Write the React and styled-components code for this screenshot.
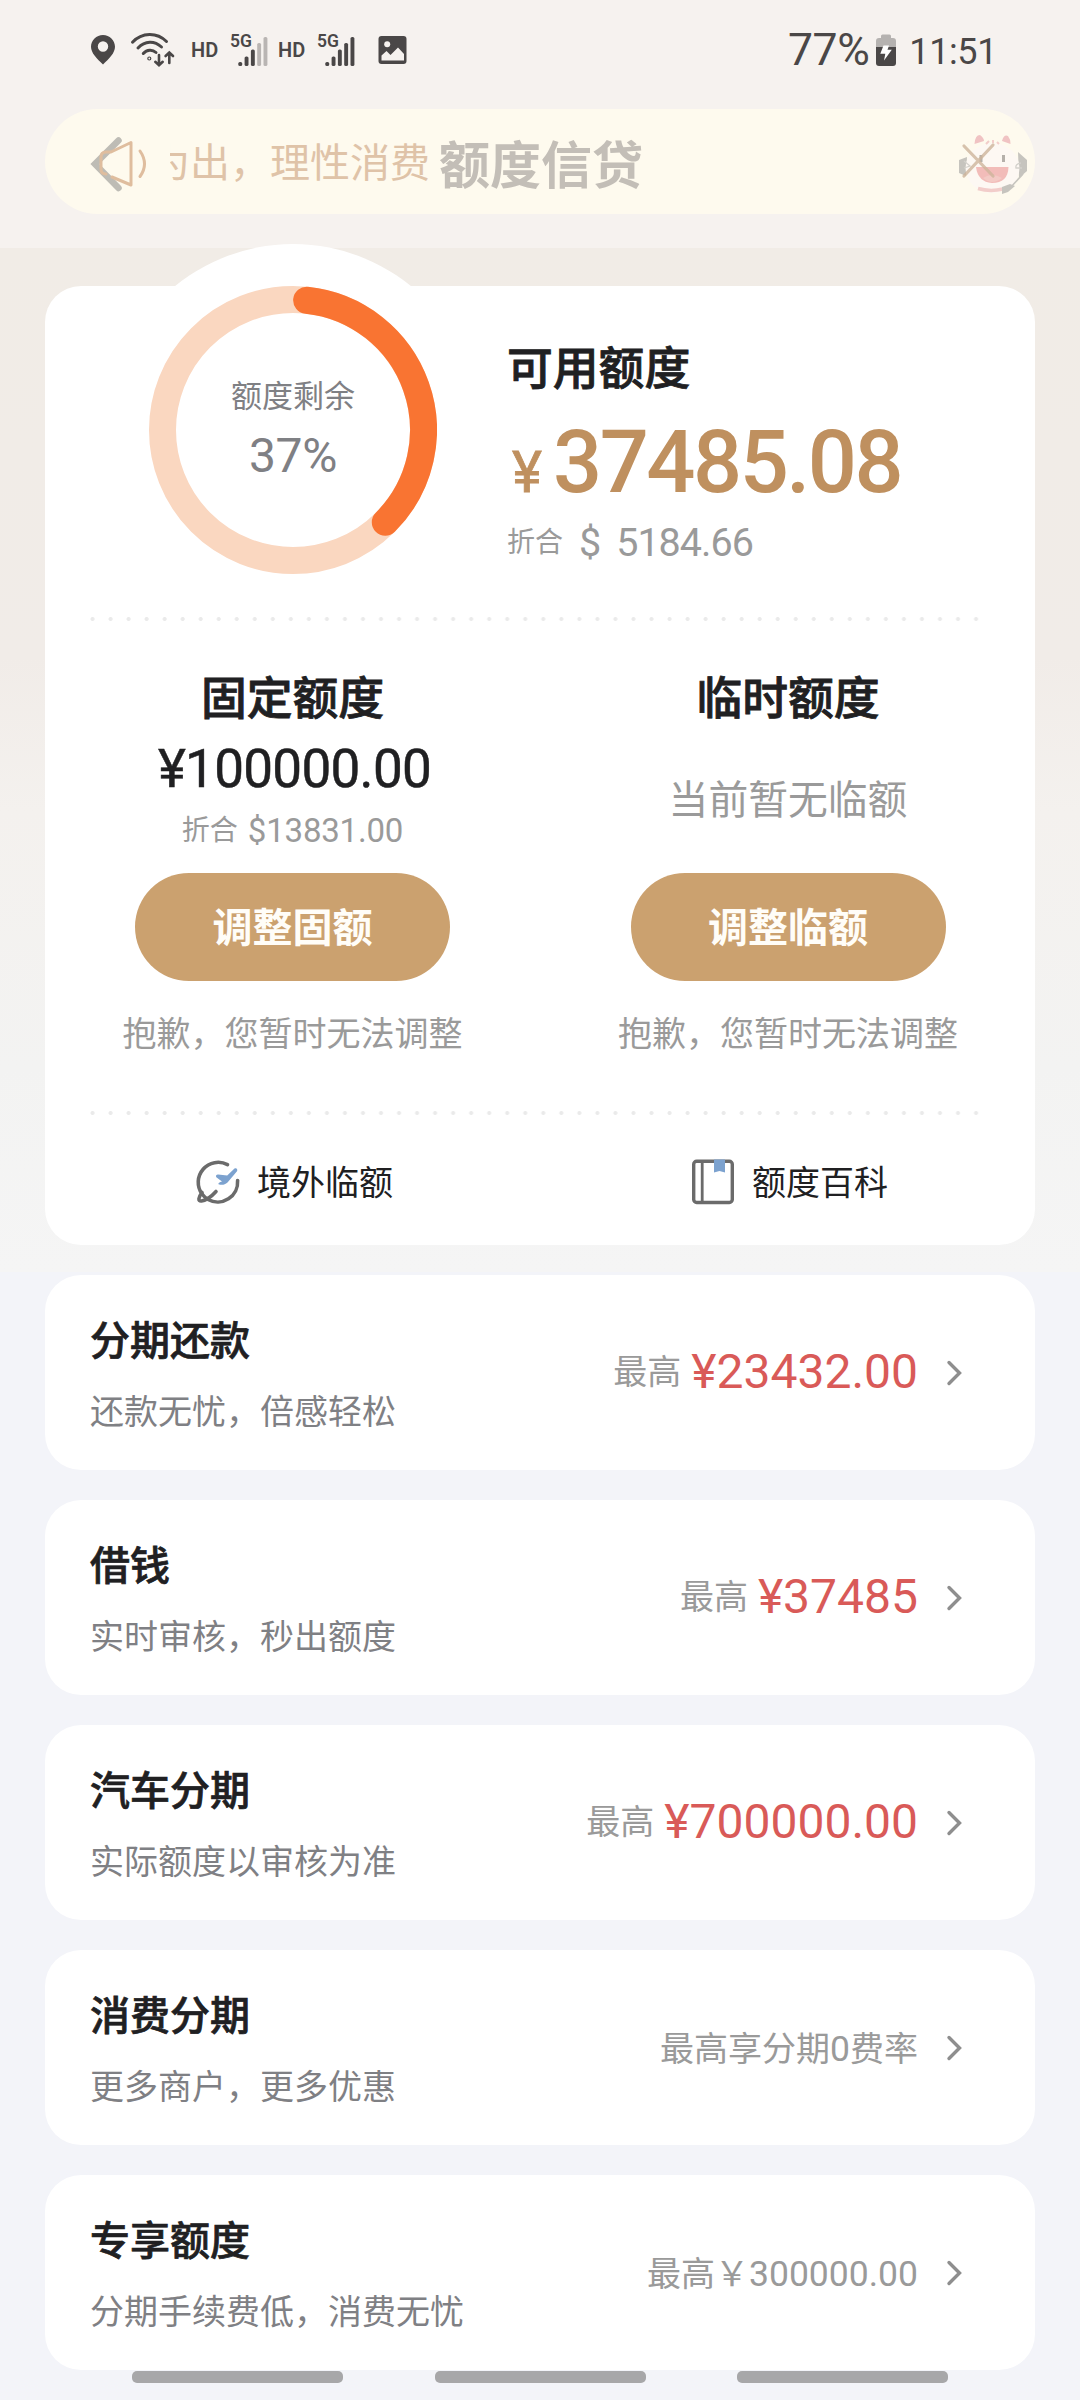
import React from "react";
import styled, { createGlobalStyle } from "styled-components";

const Global = createGlobalStyle`
  * { box-sizing: border-box; }
  html, body { margin: 0; padding: 0; }
  body {
    background: #f3f4f9;
    font-family: Roboto, "Noto Sans CJK SC", sans-serif;
    color: #202022;
  }
`;

const Page = styled.main`
  width: 1080px;
  height: 2400px;
  overflow: hidden;
  display: flex;
  flex-direction: column;
  background: #f3f4f9;
`;

const Header = styled.header`
  height: 248px;
  flex: none;
  background: #f6f2ef;
`;

const StatusBar = styled.div`
  height: 109px;
  padding: 33px 83px 0 91px;
  display: flex;
  justify-content: space-between;
  align-items: flex-start;
  color: #4a4747;
`;

const StatusGroup = styled.div`
  display: flex;
  align-items: flex-start;
  height: 34px;
`;

const StatusIcon = styled.svg`
  display: block;
  flex: none;
  overflow: visible;
  margin-left: ${(p) => p.$gap || 0}px;
`;

const HdLabel = styled.span`
  width: 27px;
  margin-left: ${(p) => p.$gap}px;
  font-size: 20px;
  font-weight: 600;
  line-height: 34px;
`;

const Signal = styled.div`
  position: relative;
  width: 38px;
  height: 34px;
  margin-left: 12px;
`;

const SignalLabel = styled.span`
  position: absolute;
  left: 0;
  top: -2px;
  font-size: 17.5px;
  font-weight: 600;
  line-height: 20px;
`;

const Percent = styled.span`
  font-size: 44.5px;
  line-height: 34px;
  letter-spacing: -0.4px;
`;

const Clock = styled.span`
  margin-left: 13px;
  font-size: 36px;
  line-height: 38px;
  letter-spacing: -0.4px;
`;

const Notice = styled.div`
  position: relative;
  margin: 0 45px;
  height: 105px;
  border-radius: 53px;
  background: #fefaee;
  display: flex;
  align-items: center;
`;

const NoticeIcon = styled.svg`
  display: block;
  flex: none;
  margin-left: 44px;
`;

const Ticker = styled.div`
  width: 260px;
  height: 60px;
  margin-left: 17px;
  overflow: hidden;
  display: flex;
  justify-content: flex-end;
  white-space: nowrap;
  font-size: 40px;
  line-height: 64px;
  color: #dfc3a8;
`;

const Title = styled.h1`
  position: absolute;
  left: 394px;
  top: 23px;
  margin: 0;
  font-size: 51px;
  line-height: 70px;
  font-weight: 700;
  white-space: nowrap;
  color: #c3beb7;
`;

const Mascot = styled.svg`
  position: absolute;
  left: 905px;
  top: 16px;
`;

const Hero = styled.section`
  height: 1024px;
  flex: none;
  padding: 38px 45px 0;
  background: linear-gradient(#f1ece6 0%, #f1ece8 40%, #f4f1ee 55%, #f3f3f2 80%, #f5f5f5 100%);
`;

const Card = styled.div`
  position: relative;
  height: 959px;
  border-radius: 36px;
  background: #fff;
`;

const Bubble = styled.div`
  position: absolute;
  left: 62px;
  top: -42px;
  width: 372px;
  height: 372px;
  border-radius: 50%;
  background: #fff;
`;

const Summary = styled.div`
  position: relative;
  height: 331px;
  padding-left: 104px;
  display: flex;
`;

const Gauge = styled.div`
  position: relative;
  width: 288px;
  height: 288px;
`;

const GaugeText = styled.div`
  position: absolute;
  inset: 0;
  padding-top: 91px;
  display: flex;
  flex-direction: column;
  align-items: center;
  color: #7f8084;
`;

const GaugeLabel = styled.span`
  font-size: 31px;
  line-height: 40px;
`;

const GaugeValue = styled.span`
  margin-top: 18px;
  font-size: 48px;
  line-height: 42px;
  letter-spacing: -0.4px;
`;

const Info = styled.div`
  margin-left: 70px;
  padding-top: 59px;
`;

const Heading = styled.h2`
  margin: 0;
  font-size: 45.8px;
  line-height: 50px;
  font-weight: 500;
  color: #202022;
  -webkit-text-stroke: 0.8px #202022;
`;

const Available = styled.div`
  height: 86px;
  margin-top: 25px;
  display: flex;
  align-items: baseline;
  color: #bf905f;
`;

const Yen = styled.span`
  width: 46px;
  padding-left: 5px;
  font-size: 57px;
  line-height: 86px;
  font-weight: 400;
  -webkit-text-stroke: 0.8px #bf905f;
`;

const Big = styled.span`
  font-size: 86.5px;
  line-height: 86px;
  font-weight: 500;
  font-kerning: none;
  letter-spacing: -2.5px;
`;

const Converted = styled.div`
  margin-top: ${(p) => p.$top}px;
  display: flex;
  align-items: center;
  height: 40px;
  color: #9a9a9a;
  font-size: 28px;
  line-height: 40px;
`;

const Money = styled.span`
  margin-left: ${(p) => p.$gap}px;
  font-size: ${(p) => p.$size}px;
  letter-spacing: ${(p) => p.$track}px;
  line-height: 40px;
  font-kerning: none;
`;

const Dots = styled.div`
  height: 4px;
  margin: 0 45px;
  background: radial-gradient(circle at 2.5px 2px, #eaeaea 1.6px, transparent 2.4px) 0 0 / 18.04px 4px repeat-x;
`;

const Columns = styled.div`
  display: grid;
  grid-template-columns: 1fr 1fr;
  height: ${(p) => p.$height}px;
`;

const Column = styled.div`
  padding: 54px 0 0 ${(p) => p.$inset || 0}px;
  display: flex;
  flex-direction: column;
  align-items: center;
`;

const ValueArea = styled.div`
  height: 148px;
  display: flex;
  flex-direction: column;
  align-items: center;
`;

const Fixed = styled.span`
  margin-top: 14px;
  padding-left: 4px;
  font-size: 53px;
  line-height: 60px;
  letter-spacing: -0.7px;
  font-kerning: none;
  -webkit-text-stroke: 0.5px #202022;
`;

const Empty = styled.span`
  margin: auto;
  padding-top: 4px;
  font-size: 39.8px;
  line-height: 50px;
  color: #9a9a9a;
`;

const Button = styled.button`
  width: 315px;
  height: 108px;
  padding: 3px 0 0;
  border: 0;
  border-radius: 54px;
  background: #cba16f;
  color: #fffdf8;
  font-family: inherit;
  font-size: 40px;
  line-height: 105px;
  font-weight: 700;
`;

const Note = styled.span`
  margin-top: 33px;
  font-size: 34px;
  line-height: 40px;
  color: #9a9a9a;
`;

const LinkItem = styled.div`
  padding: 3px 0 0 4px;
  display: flex;
  align-items: center;
  justify-content: center;
  gap: 17px;
  font-size: 34px;
  line-height: 50px;
`;

const LinkText = styled.span`
  padding-top: 2px;
`;

const List = styled.div`
  padding: 3px 45px 0;
  display: flex;
  flex-direction: column;
  gap: 30px;
`;

const Row = styled.section`
  height: 195px;
  flex: none;
  border-radius: 36px;
  background: #fff;
  padding: 0 72px 0 45px;
  display: flex;
  justify-content: space-between;
`;

const RowText = styled.div`
  padding-top: 42px;
`;

const RowTitle = styled.h3`
  margin: 0;
  font-size: 40px;
  line-height: 50px;
  font-weight: 500;
  -webkit-text-stroke: 0.7px #202022;
`;

const RowSub = styled.p`
  margin: 25px 0 0;
  font-size: 34px;
  line-height: 40px;
  color: #7f8084;
`;

const RowEnd = styled.div`
  display: flex;
  align-items: center;
  font-size: 34px;
  color: #9a9a9a;
`;

const RowNote = styled.span`
  padding-bottom: ${(p) => (p.$low ? 2 : 7)}px;
`;

const NoteDigits = styled.span`
  font-size: 35.5px;
`;

const Amount = styled.span`
  margin-left: 10px;
  padding-bottom: 3px;
  font-size: 48px;
  color: #d95a58;
`;

const Chevron = styled.svg`
  display: block;
  margin-left: 28px;
`;

const NavBars = styled.div`
  margin-top: 1px;
  padding: 0 132px;
  display: flex;
  justify-content: space-between;
`;

const NavBar = styled.span`
  width: 211px;
  height: 12px;
  border-radius: 5px;
  background: #a7a7a9;
`;

function SignalBars({ dim }) {
  const tops = [29, 23.5, 16.5, 10, 4];
  return (
    <Signal>
      <SignalLabel>5G</SignalLabel>
      <StatusIcon width="38" height="34" viewBox="0 0 38 34">
        {tops.map((t, i) => (
          <rect
            key={t}
            x={8.3 + i * 6.3}
            y={t}
            width="3.9"
            height={33 - t}
            rx="1.6"
            fill={dim && i > 2 ? "#b9b5b3" : "#4a4747"}
          />
        ))}
      </StatusIcon>
    </Signal>
  );
}

function Ring() {
  const r = 130.5;
  const at = (deg) => {
    const a = (deg * Math.PI) / 180;
    return `${144 + r * Math.sin(a)} ${144 - r * Math.cos(a)}`;
  };
  return (
    <svg width="288" height="288" viewBox="0 0 288 288" fill="none">
      <circle cx="144" cy="144" r={r} stroke="#fad7c0" strokeWidth="27" />
      <path d={`M${at(6)} A${r} ${r} 0 0 1 ${at(135)}`} stroke="#f97432" strokeWidth="27" strokeLinecap="round" />
    </svg>
  );
}

function GlobeIcon() {
  return (
    <svg width="44" height="46" viewBox="0 0 44 46" fill="none">
      <path d="M31.5 5.6 A20 20 0 0 0 6 35" stroke="#6b6b6b" strokeWidth="3.6" strokeLinecap="round" />
      <path d="M41.6 21.5 A20 20 0 0 1 12 40.5 C9 38.5 7.5 37 6 35" stroke="#6b6b6b" strokeWidth="3.6" strokeLinecap="round" />
      <path d="M6 33.5 C2.5 38 1.5 42.5 5.5 42 C10.5 41.2 15.5 37.5 20 32.5" stroke="#6b6b6b" strokeWidth="3.6" strokeLinecap="round" />
      <path d="M38.5 9.5 C40.5 8.5 42 10.3 41 12.2 L31.5 23.5 C28.5 26.2 25.5 26.3 22.5 25.2 C22 24 23.5 23.4 26 22.6 L20.3 18.2 C19.4 16.6 20.5 15.3 22.3 15.5 L31.2 16.4 Z" fill="#7ca2cf" />
    </svg>
  );
}

function BookIcon() {
  return (
    <svg width="44" height="46" viewBox="0 0 44 46" fill="none">
      <rect x="2.7" y="2.2" width="38.6" height="41.3" rx="3" stroke="#6b6b6b" strokeWidth="3.4" />
      <path d="M11.2 2 V43.5" stroke="#6b6b6b" strokeWidth="2.8" />
      <path d="M23 0.6 H34 V13.6 L28.5 12 L23 13.6 Z" fill="#7ca2cf" />
    </svg>
  );
}

const rows = [
  { title: "分期还款", sub: "还款无忧，倍感轻松", note: "最高", amount: "¥23432.00" },
  { title: "借钱", sub: "实时审核，秒出额度", note: "最高", amount: "¥37485" },
  { title: "汽车分期", sub: "实际额度以审核为准", note: "最高", amount: "¥700000.00" },
  { title: "消费分期", sub: "更多商户，更多优惠", note: "最高享分期", digits: "0", tail: "费率" },
  { title: "专享额度", sub: "分期手续费低，消费无忧", note: "最高￥", digits: "300000.00" },
];

export default function App() {
  return (
    <Page>
      <Global />
      <Header>
        <StatusBar>
          <StatusGroup>
            <StatusIcon width="24" height="34" viewBox="0 0 24 34">
              <path
                d="M12 2 C5.4 2 0 7.2 0 13.8 C0 20 6 26 12 31.5 C18 26 24 20 24 13.8 C24 7.2 18.6 2 12 2 Z M12 8.3 A5.2 5.2 0 1 1 12 18.7 A5.2 5.2 0 1 1 12 8.3 Z"
                fill="#4a4747"
                fillRule="evenodd"
              />
            </StatusIcon>
            <StatusIcon $gap={16} width="44" height="34" viewBox="0 0 44 34" fill="none" stroke="#4a4747" strokeWidth="3" strokeLinecap="round">
              <path d="M1.5 9.2 C11 -1 26 -1 35.5 8.5" />
              <path d="M7 15 C14 7.5 23.5 7.5 30.5 14" />
              <path d="M12.3 20.5 C16 16.3 21.5 16.3 25 19.5" />
              <circle cx="18.3" cy="25.5" r="0.6" />
              <path d="M28 22 V32 M24.3 28.8 L28 32.3 L31.7 28.8" strokeWidth="2.6" />
              <path d="M38.3 30 V20 M34.6 23 L38.3 19.5 L42 23" strokeWidth="2.6" />
            </StatusIcon>
            <HdLabel $gap={16}>HD</HdLabel>
            <SignalBars dim />
            <HdLabel $gap={10}>HD</HdLabel>
            <SignalBars />
            <StatusIcon $gap={23} width="29" height="34" viewBox="0 0 29 34">
              <rect x="0.5" y="3" width="28" height="28" rx="3" fill="#4a4747" />
              <path d="M3.5 22.5 L8.5 18 L12.5 22 L20 14.5 L26 21 V27.5 H3.5 Z" fill="#f6f2ef" />
              <circle cx="9.2" cy="11.3" r="3" fill="#f6f2ef" />
            </StatusIcon>
          </StatusGroup>
          <StatusGroup>
            <Percent>77%</Percent>
            <StatusIcon $gap={7} width="20" height="34" viewBox="0 0 20 34">
              <path d="M5 5 V3 Q5 1.5 6.5 1.5 H13.5 Q15 1.5 15 3 V5 H17 Q20 5 20 8 V15 H0 V8 Q0 5 3 5 Z" fill="#b5b2b0" />
              <path d="M0 14 H20 V30 Q20 33 17 33 H3 Q0 33 0 30 Z" fill="#4a4747" />
              <path d="M7.5 12.5 H13 L11.5 16.8 H15.8 L8 27.5 L9.3 20.8 H4.3 Z" fill="#fff" />
            </StatusIcon>
            <Clock>11:51</Clock>
          </StatusGroup>
        </StatusBar>
        <Notice>
          <NoticeIcon width="64" height="60" viewBox="0 0 64 60" fill="none" strokeLinecap="round">
            <path d="M29.5 8.5 L6 32 L29.5 56" stroke="#bebcb5" strokeWidth="6.5" />
            <path d="M23 45 L42 53 V10.5 L22 20 H17 Q12 20 12 25 V37 Q12 42 17 42" stroke="#dfbd9e" strokeWidth="3" strokeLinejoin="round" />
            <path d="M51 19 Q60 32 51 44.5" stroke="#dfbd9e" strokeWidth="3" />
          </NoticeIcon>
          <Ticker>量入为出，理性消费</Ticker>
          <Title>额度信贷</Title>
          <Mascot width="90" height="80" viewBox="0 0 90 80" fill="none">
            <path d="M17 32 L9 35 V48 L16 51 Z M68 27 L77 35 V46 L69 53 Z" fill="#c6c4be" />
            <ellipse cx="42.5" cy="43" rx="27" ry="25" fill="#fdf8f3" />
            <path d="M24.5 19 Q25 10 30 10 Q34 13 34 16 Z M52 16 Q54 9 58 11 Q61 15 60.5 19 Z" fill="#f0c3c3" />
            <path d="M36 19 L39 16 M43 18 V15 M47 17 L49 19" stroke="#f2cdca" strokeWidth="2" />
            <path d="M26 42 H58.5 Q58 58 42 58 Q28 57 26 42 Z" fill="#f2bcb9" />
            <path d="M33 53 Q42 47 52 53 Q42 61 33 53 Z" fill="#f3cac5" />
            <path d="M28 63.5 Q40 67 53 64" stroke="#f2cdca" strokeWidth="3.5" />
            <path d="M31 30 V37 M53.5 30 V37" stroke="#b5b0aa" strokeWidth="3" />
            <path d="M14 36 L20 41 L14 43 M71 38 Q65 39 66 43 L72 43" stroke="#d3d1cb" strokeWidth="1.3" />
            <path d="M73 49 L60 63" stroke="#c6c4be" strokeWidth="1.6" />
            <path d="M52 62 L60 59 L65 61 L58 67 L52 69 Z" fill="#c6c4be" />
            <path d="M14 21 L43 51 M43 20 L14 51" stroke="#cdb49b" strokeOpacity="0.8" strokeWidth="3.2" strokeLinecap="round" />
          </Mascot>
        </Notice>
      </Header>

      <Hero>
        <Card>
          <Bubble />
          <Summary>
            <Gauge>
              <Ring />
              <GaugeText>
                <GaugeLabel>额度剩余</GaugeLabel>
                <GaugeValue>37%</GaugeValue>
              </GaugeText>
            </Gauge>
            <Info>
              <Heading>可用额度</Heading>
              <Available>
                <Yen>¥</Yen>
                <Big>37485.08</Big>
              </Available>
              <Converted $top={17}>
                折合
                <Money $gap={16} $size={39.5} $track={-1}>$</Money>
                <Money $gap={16} $size={39.5} $track={-1}>5184.66</Money>
              </Converted>
            </Info>
          </Summary>
          <Dots />
          <Columns $height={490}>
            <Column>
              <Heading>固定额度</Heading>
              <ValueArea>
                <Fixed>¥100000.00</Fixed>
                <Converted $top={12}>
                  折合
                  <Money $gap={10} $size={33} $track={-0.2}>$13831.00</Money>
                </Converted>
              </ValueArea>
              <Button>调整固额</Button>
              <Note>抱歉，您暂时无法调整</Note>
            </Column>
            <Column $inset={1}>
              <Heading>临时额度</Heading>
              <ValueArea>
                <Empty>当前暂无临额</Empty>
              </ValueArea>
              <Button>调整临额</Button>
              <Note>抱歉，您暂时无法调整</Note>
            </Column>
          </Columns>
          <Dots />
          <Columns $height={130}>
            <LinkItem>
              <GlobeIcon />
              <LinkText>境外临额</LinkText>
            </LinkItem>
            <LinkItem>
              <BookIcon />
              <LinkText>额度百科</LinkText>
            </LinkItem>
          </Columns>
        </Card>
      </Hero>

      <List>
        {rows.map((row) => (
          <Row key={row.title}>
            <RowText>
              <RowTitle>{row.title}</RowTitle>
              <RowSub>{row.sub}</RowSub>
            </RowText>
            <RowEnd>
              <RowNote $low={!row.amount}>
                {row.note}
                {row.digits && <NoteDigits>{row.digits}</NoteDigits>}
                {row.tail}
              </RowNote>
              {row.amount && <Amount>{row.amount}</Amount>}
              <Chevron width="17" height="30" viewBox="0 0 17 30" fill="none">
                <path d="M3 4.5 L13.5 15 L3 25.5" stroke="#8e8e8e" strokeWidth="3.4" strokeLinecap="round" />
              </Chevron>
            </RowEnd>
          </Row>
        ))}
      </List>
      <NavBars>
        <NavBar />
        <NavBar />
        <NavBar />
      </NavBars>
    </Page>
  );
}
